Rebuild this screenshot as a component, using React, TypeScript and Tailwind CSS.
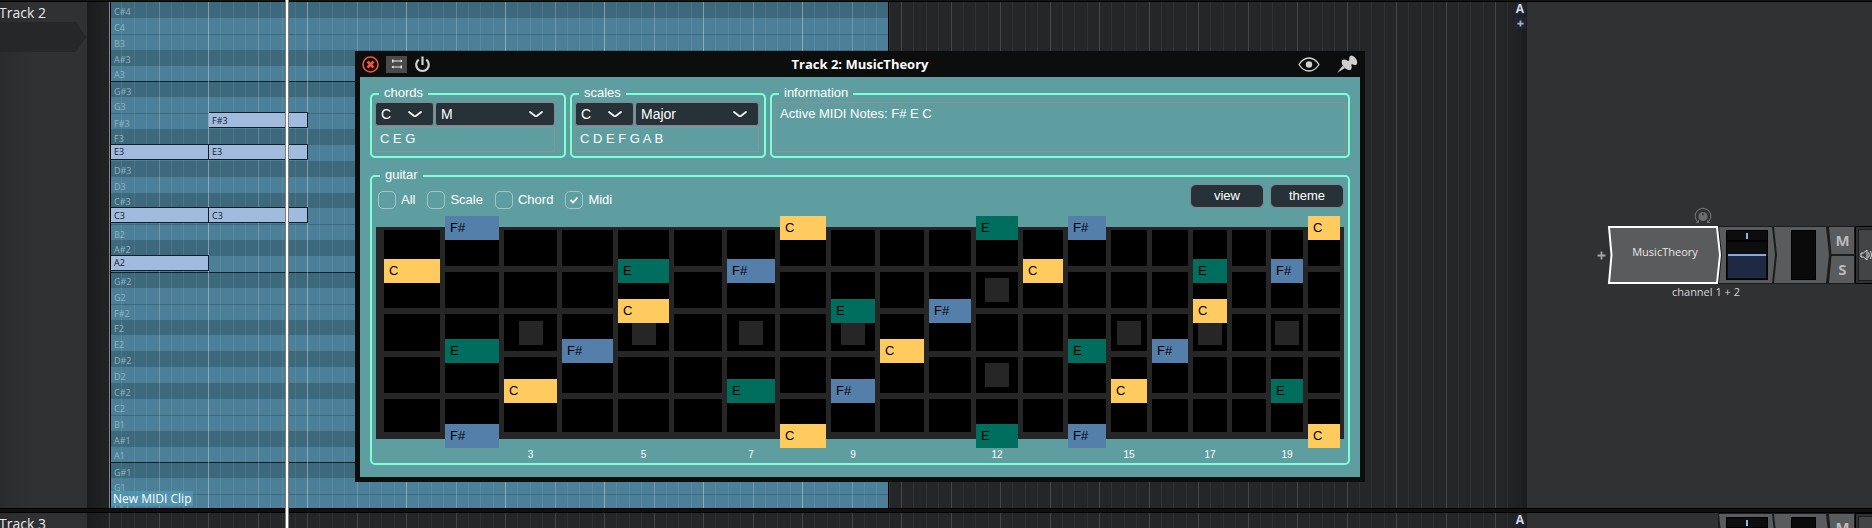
import type { ReactNode } from "react";

type Tone = "c" | "e" | "f";

const PITCHES = [
  "C#4", "C4", "B3", "A#3", "A3", "G#3", "G3", "F#3", "F3", "E3", "D#3", "D3", "C#3", "C3",
  "B2", "A#2", "A2", "G#2", "G2", "F#2", "F2", "E2", "D#2", "D2", "C#2", "C2",
  "B1", "A#1", "A1", "G#1", "G1", "F#1",
];

const MIDI_NOTES = [
  { pitch: "F#3", beat: 2 },
  { pitch: "E3", beat: 1 },
  { pitch: "E3", beat: 2 },
  { pitch: "C3", beat: 1 },
  { pitch: "C3", beat: 2 },
  { pitch: "A2", beat: 1 },
];

const FRETS = Array.from({ length: 20 }, (_, i) => i + 1);
const MARKED = [3, 5, 7, 9, 12, 15, 17, 19];

const STRINGS: { fret: number; note: string }[][] = [
  [{ fret: 2, note: "F#" }, { fret: 8, note: "C" }, { fret: 12, note: "E" }, { fret: 14, note: "F#" }, { fret: 20, note: "C" }],
  [{ fret: 1, note: "C" }, { fret: 5, note: "E" }, { fret: 7, note: "F#" }, { fret: 13, note: "C" }, { fret: 17, note: "E" }, { fret: 19, note: "F#" }],
  [{ fret: 5, note: "C" }, { fret: 9, note: "E" }, { fret: 11, note: "F#" }, { fret: 17, note: "C" }],
  [{ fret: 2, note: "E" }, { fret: 4, note: "F#" }, { fret: 10, note: "C" }, { fret: 14, note: "E" }, { fret: 16, note: "F#" }],
  [{ fret: 3, note: "C" }, { fret: 7, note: "E" }, { fret: 9, note: "F#" }, { fret: 15, note: "C" }, { fret: 19, note: "E" }],
  [{ fret: 2, note: "F#" }, { fret: 8, note: "C" }, { fret: 12, note: "E" }, { fret: 14, note: "F#" }, { fret: 20, note: "C" }],
];

const TONES: Record<Tone, string> = {
  c: "bg-[#ffcb5e]",
  e: "bg-[#006e5f]",
  f: "bg-[#557fab]",
};

const FRET_COLUMNS =
  "grid gap-x-[5px] pl-2 pr-1 grid-cols-[56fr_54fr_53fr_51fr_51fr_48fr_48fr_46fr_44fr_44fr_42fr_42fr_40fr_38fr_36fr_36fr_34fr_34fr_32fr_32fr]";

function rowStyle(pitch: string) {
  const name = pitch.slice(0, -1);
  if (name === "G#") return "bg-[#3d697c] border-t border-[#0d2027]";
  if (name === "F") return "bg-[#3d697c]";
  if (name === "F#" || name === "B") return "bg-[#4c8099] border-t border-[#3a687d]";
  if (name.endsWith("#")) return "bg-[#3d697c]";
  return "bg-[#4c8099]";
}

function GridLines({ bright }: { bright: boolean }) {
  const tone = (i: number) => {
    if (bright) return i === 0 ? "border-white/35" : i === 4 ? "border-white/20" : "border-white/8";
    return i % 4 === 0 ? "border-white/15" : "border-white/5";
  };
  return (
    <div className="flex h-full">
      {Array.from({ length: 15 }, (_, bar) => (
        <div key={bar} className="flex h-full w-[99px] shrink-0">
          {Array.from({ length: 8 }, (_, i) => (
            <div key={i} className={`h-full flex-1 border-l ${tone(i)}`} />
          ))}
        </div>
      ))}
    </div>
  );
}

function MidiClip() {
  return (
    <>
      <div className="absolute inset-y-0 left-px w-[779px] overflow-hidden border-x border-black">
        <div className="grid h-[508px] grid-rows-[repeat(32,minmax(0,1fr))]">
          {PITCHES.map((p) => (
            <div key={p} className={`flex items-center pt-[3px] pl-[3px] text-[9px] leading-none text-[#90b3c1] ${rowStyle(p)}`}>
              {p}
            </div>
          ))}
        </div>
      </div>
      <div className="absolute inset-y-0 left-0 w-[779px] overflow-hidden">
        <GridLines bright />
      </div>
      <div className="absolute -top-px left-[2px] grid h-[508px] grid-cols-[98px_99px] grid-rows-[repeat(32,minmax(0,1fr))]">
        {MIDI_NOTES.map((n) => (
          <div
            key={n.pitch + n.beat}
            className="flex items-center border-y border-r border-[#141c26] bg-[#a0bbde] pl-[3px] text-[9px] leading-none text-[#18202b]"
            style={{ gridRow: PITCHES.indexOf(n.pitch) + 1, gridColumn: n.beat }}
          >
            {n.pitch}
          </div>
        ))}
      </div>
      <div className="absolute bottom-[2px] left-[2px] bg-[#5097b5]/80 px-[2px] text-[12px] leading-[15px] text-white">
        New MIDI Clip
      </div>
    </>
  );
}

function TrackHeader({ name, children }: { name: string; children?: ReactNode }) {
  return (
    <div className="w-[87px] shrink-0 overflow-hidden bg-linear-to-r from-[#2a2b2c] to-[#303133] to-40%">
      <h2 className="-ml-px pt-0.5 text-[14px] leading-[18px] whitespace-nowrap text-[#e8e8e8]">{name}</h2>
      {children}
    </div>
  );
}

function Timeline({ children, add }: { children?: ReactNode; add?: boolean }) {
  return (
    <>
      <div className="w-[22px] shrink-0 bg-linear-to-r from-[#1a1b1c] to-[#222324]" />
      <div className="relative min-w-0 flex-1 overflow-hidden bg-[#252628]">
        <div className="absolute inset-0">
          <GridLines bright={false} />
        </div>
        <div className="absolute inset-y-0 right-0 w-6 bg-linear-to-r from-transparent to-[#1b1c1d]" />
        {children}
        <div className="absolute top-px right-[1px] flex w-3 flex-col gap-[2px] text-center text-[12px] leading-[12px] font-bold text-[#d8d8dc]">
          <button type="button" aria-label="Automation" className="h-3 bg-[#1f2433]">A</button>
          {add && (
            <button type="button" aria-label="Add automation" className="flex h-3 items-center justify-center bg-[#1f2433]">
              <svg viewBox="0 0 8 8" className="size-[7px]"><path d="M4 0.5V7.5M0.5 4H7.5" stroke="#a8acb8" strokeWidth="2" /></svg>
            </button>
          )}
        </div>
      </div>
    </>
  );
}

function ChannelStrip() {
  return (
    <div className="relative flex h-[58px] w-[154px] shrink-0">
      <svg viewBox="0 0 137 58" className="absolute top-0 left-0 h-[58px] w-[137px]" aria-hidden="true">
        <rect width="137" height="58" fill="#1b1c1d" />
        <path d="M1 1H54L57 29L54 57H1L4 29Z" fill="#5a5b5d" />
        <path d="M56 1H108L111 29L108 57H56L59 29Z" fill="#5a5b5d" />
        <path d="M111 1H136V28H113.500Z" fill="#5a5b5d" />
        <path d="M113.500 30H136V57H111Z" fill="#5a5b5d" />
      </svg>
      <div className="relative flex w-[57px] flex-col pt-1 pl-2">
        <div className="flex h-[11px] w-[42px] items-center justify-center border border-black bg-[#0d0d0e]">
          <div className="h-[6px] w-[2px] bg-[#8fb3f5]" />
        </div>
        <div className="flex h-[39px] w-[42px] flex-col justify-end border border-black bg-[#0d0d0e] p-px">
          <div className="h-6 border-t-2 border-[#86a8e6] bg-[#1e2a44]" />
        </div>
      </div>
      <div className="relative flex w-[55px] pt-1 pl-4">
        <div className="h-[50px] w-[25px] border border-black bg-[#0a0a0b]" />
      </div>
      <div className="relative flex w-[25px] flex-col text-[15px] font-bold text-[#b9babb]">
        <button type="button" className="h-[29px] leading-[29px]">M</button>
        <button type="button" className="h-[29px] leading-[29px]">S</button>
      </div>
      <button type="button" aria-label="Output" className="relative flex flex-1 items-center overflow-hidden border-y border-l border-black bg-[#303133] py-[2px] pl-[2px]">
        <span className="flex h-full flex-1 items-center border-y border-l border-[#1d1d1e] bg-[#434445] pl-px">
          <svg viewBox="0 0 12 14" className="h-[14px] w-3" fill="none" stroke="#dcdcdc">
            <path d="M1 5H3.500L7 2V12L3.500 9H1Z" />
            <path d="M8.500 4.500Q10 7 8.500 9.500M10.500 3Q12.500 7 10.500 11" />
          </svg>
        </span>
      </button>
    </div>
  );
}

function Chevron() {
  return (
    <svg viewBox="0 0 14 8" className="pointer-events-none absolute top-2 right-3 h-2 w-[14px]" fill="none" stroke="#f2f2f2" strokeWidth="1.800" strokeLinecap="round" strokeLinejoin="round">
      <path d="M1 2L5.800 5.700Q7 6.500 8.200 5.700L13 2" />
    </svg>
  );
}

function Picker({ label, value, options, className }: { label: string; value: string; options: string[]; className: string }) {
  return (
    <div className={`relative ${className}`}>
      <select aria-label={label} defaultValue={value} className="block h-6 w-full appearance-none rounded-[3px] border border-[#85888c] bg-[#263238] pl-[5px] text-[14px] text-white">
        {options.map((o) => <option key={o}>{o}</option>)}
      </select>
      <Chevron />
    </div>
  );
}

function Group({ title, className, children }: { title: string; className: string; children: ReactNode }) {
  return (
    <fieldset className={`min-w-0 rounded-[5px] border-2 border-[#7fffd4] ${className}`}>
      <legend className="ml-[4px] h-4 px-[5px] text-[13px] leading-[13px]">{title}</legend>
      {children}
    </fieldset>
  );
}

function Check({ label, checked }: { label: string; checked?: boolean }) {
  return (
    <label className="flex items-center gap-[5px]">
      <span className="relative size-[18px]">
        <input type="checkbox" defaultChecked={checked} className="peer block size-[18px] appearance-none rounded-[5px] border border-[#a3c5c7]" />
        <svg viewBox="0 0 18 18" className="pointer-events-none absolute inset-0 hidden size-[18px] peer-checked:block" fill="none" stroke="#fff" strokeWidth="1.800">
          <path d="M5.500 9L8 11.500L12.500 6.500" />
        </svg>
      </span>
      {label}
    </label>
  );
}

function Fretboard() {
  return (
    <div>
      <div className="relative bg-[#262626]">
        <div className={`${FRET_COLUMNS} grid-rows-[36px_36px_37px_36px_33px] gap-y-[6px] pt-[3px] pb-[7px]`}>
          {[0, 1, 2, 3, 4].map((row) =>
            FRETS.map((fret) => {
              const inlay = fret === 12 ? row === 1 || row === 3 : row === 2 && MARKED.includes(fret);
              return (
                <div key={`${row}-${fret}`} className="flex items-center justify-center bg-black">
                  {inlay && <div className="size-6 bg-[#262626]" />}
                </div>
              );
            }),
          )}
        </div>
        <div className={`absolute inset-x-0 -top-[11px] ${FRET_COLUMNS} grid-rows-[43px_40px_40px_40px_45px_24px]`}>
          {STRINGS.map((notes, s) =>
            notes.map((n) => (
              <div
                key={`${s}-${n.fret}`}
                className={`h-6 pl-[5px] text-[13px] leading-6 text-black ${TONES[n.note[0].toLowerCase() as Tone]}`}
                style={{ gridRow: s + 1, gridColumn: n.fret }}
              >
                {n.note}
              </div>
            )),
          )}
        </div>
      </div>
      <div className={`${FRET_COLUMNS} pt-[10px] text-center text-[10px] leading-3`}>
        {FRETS.map((f) => <span key={f}>{MARKED.includes(f) ? f : ""}</span>)}
      </div>
    </div>
  );
}

function PluginWindow() {
  return (
    <section aria-label="MusicTheory" className="absolute top-[51px] left-[355px] w-[1010px] bg-[#0c0d0d] px-[5px] pb-[5px]">
      <header className="grid h-[26px] grid-cols-[1fr_auto_1fr] items-center text-white">
        <div className="flex items-center gap-[7px] pl-[2px]">
          <button type="button" aria-label="Close">
            <svg viewBox="0 0 17 17" className="size-[17px]" fill="none" stroke="#f2543f">
              <circle cx="8.500" cy="8.500" r="7.500" strokeWidth="1.600" />
              <path d="M5.500 5.500L11.500 11.500M11.500 5.500L5.500 11.500" strokeWidth="2.600" />
            </svg>
          </button>
          <button type="button" aria-label="Routing" className="flex h-[17px] w-[21px] items-center justify-center bg-[#4a4a4b]">
            <svg viewBox="0 0 12 10" className="h-[10px] w-3" stroke="#e3e3e3" fill="#e3e3e3">
              <path d="M1 2H11M1 8H11" strokeWidth="1.200" />
              <path d="M1 0.500H2.500V3.500H1ZM9.500 0.500L11.500 2L9.500 3.500ZM2.500 6.500L0.500 8L2.500 9.500ZM9.500 6.500H11V9.500H9.500Z" stroke="none" />
            </svg>
          </button>
          <button type="button" aria-label="Power">
            <svg viewBox="0 0 17 17" className="size-[17px]" fill="none" stroke="#d2d2d2" strokeWidth="2.200">
              <path d="M4.800 3.600A6.300 6.300 0 1 0 12.200 3.600M8.500 0.500V9" />
            </svg>
          </button>
        </div>
        <h1 className="text-[13px] leading-[22px] font-bold">Track 2: MusicTheory</h1>
        <div className="flex items-center justify-end gap-[17px] pr-[2px]">
          <button type="button" aria-label="Show">
            <svg viewBox="0 0 22 15" className="h-[15px] w-[22px]" fill="none" stroke="#d2d2d2" strokeWidth="1.300">
              <path d="M1 7.500C4 2.800 7.500 1 11 1S18 2.800 21 7.500C18 12.200 14.500 14 11 14S4 12.200 1 7.500Z" />
              <circle cx="11" cy="7.500" r="3.200" fill="#d2d2d2" stroke="none" />
            </svg>
          </button>
          <button type="button" aria-label="Pin">
            <svg viewBox="0 0 21 18" className="h-[18px] w-[21px]" fill="#cfcfcf">
              <path d="M0.300 17.700L5.500 10.800L8 13Z" />
              <ellipse cx="9.700" cy="9.700" rx="3.700" ry="6.300" transform="rotate(-42 9.700 9.700)" />
              <ellipse cx="16.200" cy="5.300" rx="3.200" ry="5.300" transform="rotate(-35 16.200 5.300)" />
              <path d="M10 7.500L13.500 3.500L17 8.500L12.500 10.500Z" />
            </svg>
          </button>
        </div>
      </header>

      <div className="flex flex-col gap-[10px] bg-[#5f9ea0] px-[10px] pt-[9px] pb-3 font-['Liberation_Sans',sans-serif] text-[13px] text-white">
        <div className="flex gap-1">
          <Group title="chords" className="w-[196px] px-[3px] pb-1">
            <div className="w-[180px]">
              <div className="flex gap-px">
                <Picker label="Chord root" value="C" options={["C", "D", "E", "F", "G", "A", "B"]} className="w-[59px]" />
                <Picker label="Chord type" value="M" options={["M", "m", "7"]} className="flex-1" />
              </div>
              <output className="mt-px block h-[25px] border border-[#8f9095] pl-1 leading-[22px]">C E G</output>
            </div>
          </Group>
          <Group title="scales" className="w-[196px] px-[3px] pb-1">
            <div className="w-[184px]">
              <div className="flex gap-px">
                <Picker label="Scale root" value="C" options={["C", "D", "E", "F", "G", "A", "B"]} className="w-[59px]" />
                <Picker label="Scale type" value="Major" options={["Major", "Minor"]} className="flex-1" />
              </div>
              <output className="mt-px block h-[25px] border border-[#8f9095] pl-1 leading-[22px]">C D E F G A B</output>
            </div>
          </Group>
          <Group title="information" className="flex-1 px-[3px] pb-1">
            <output className="block h-[50px] border border-[#8f9095] pl-1 leading-[22px]">Active MIDI Notes: F# E C</output>
          </Group>
        </div>

        <Group title="guitar" className="px-1 pb-[2px]">
          <div className="flex h-[43px] items-start justify-between">
            <div className="flex gap-3 pt-[6px] pl-[2px]">
              <Check label="All" />
              <Check label="Scale" />
              <Check label="Chord" />
              <Check label="Midi" checked />
            </div>
            <div className="flex gap-[6px]">
              <button type="button" className="h-6 w-[74px] rounded-md border border-[#85888c] bg-[#263238] leading-5">view</button>
              <button type="button" className="h-6 w-[74px] rounded-md border border-[#85888c] bg-[#263238] leading-5">theme</button>
            </div>
          </div>
          <Fretboard />
        </Group>
      </div>
    </section>
  );
}

export default function App() {
  return (
    <main className="relative flex h-screen flex-col overflow-hidden bg-[#303133] font-['Open_Sans',sans-serif]">
      <div className="h-[2px] shrink-0 border-b border-black bg-[#141414]" />
      <div className="flex h-[506px] shrink-0">
        <TrackHeader name="Track 2">
          <svg viewBox="0 0 87 30" className="block h-[30px] w-[87px]" aria-hidden="true">
            <path d="M0 0H76L86 15L76 30H0Z" fill="#262728" />
          </svg>
        </TrackHeader>
        <Timeline add>
          <MidiClip />
        </Timeline>
        <div className="flex w-[345px] shrink-0 flex-col overflow-hidden bg-[#303133] pt-[205px]">
          <div className="flex h-[19px] items-start pl-[167px]">
            <svg viewBox="0 0 18 18" className="size-[18px]" fill="none" stroke="#6b6c6e" aria-hidden="true">
              <circle cx="9" cy="9.500" r="4.600" fill="#6b6c6e" stroke="none" />
              <path d="M4.500 15.500A7.800 7.800 0 1 1 13.500 15.500" strokeWidth="1.200" />
              <path d="M1.500 16H5V12.500ZM16.500 16H13V12.500Z" fill="#6b6c6e" stroke="none" />
              <circle cx="9" cy="7.300" r="1" fill="#303133" stroke="none" />
            </svg>
          </div>
          <div className="flex items-center justify-end">
            <button type="button" aria-label="Add plugin" className="mr-[1px]">
              <svg viewBox="0 0 9 9" className="size-[9px]"><path d="M4.500 0.500V8.500M0.500 4.500H8.500" stroke="#a5a6a8" strokeWidth="1.800" /></svg>
            </button>
            <button type="button" className="relative z-10 -mr-[3px] flex h-[58px] w-[114px] justify-center pt-[18px] text-[11px] leading-4 text-[#e6e6e6]">
              <svg viewBox="0 0 114 58" className="absolute inset-0 h-[58px] w-[114px]" aria-hidden="true">
                <path d="M2 1H110L113 29L110 57H2L4.500 29Z" fill="#5a5b5d" stroke="#fff" strokeWidth="2" />
              </svg>
              <span className="relative pl-[2px]">MusicTheory</span>
            </button>
            <ChannelStrip />
          </div>
          <p className="pl-[145px] text-[11px] leading-4 text-[#d6d6d6]">channel 1 + 2</p>
        </div>
      </div>
      <div className="h-[5px] shrink-0 border-y border-black bg-[#101010]" />
      <div className="flex min-h-0 flex-1 overflow-hidden">
        <TrackHeader name="Track 3" />
        <Timeline />
        <div className="flex w-[345px] shrink-0 items-start justify-end overflow-hidden bg-[#303133]">
          <ChannelStrip />
        </div>
      </div>
      <div className="absolute inset-y-0 left-[285px] w-1 border-x border-black/50 bg-white" />
      <PluginWindow />
    </main>
  );
}
